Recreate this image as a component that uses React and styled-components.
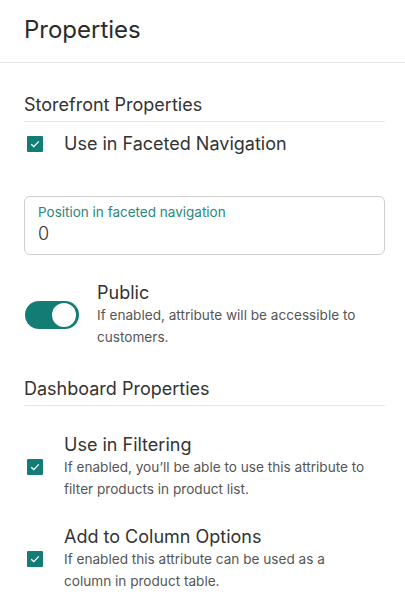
import React from 'react'
import styled, { createGlobalStyle } from 'styled-components'

const GlobalStyle = createGlobalStyle`
  body {
    margin: 0;
    background: #ffffff;
    font-family: Inter, "Noto Sans", sans-serif;
    color: #333333;
  }
`

const teal = '#137d75'

const Page = styled.div`
  width: 405px;
  background: #fff;
`

const Header = styled.header`
  padding: 15px 20px 17px 24px;
  border-bottom: 1px solid #e8e8e8;
`

const Title = styled.h1`
  margin: 0;
  font-size: 24px;
  line-height: 30px;
  font-weight: 400;
  color: #2b2b2b;
`

const Body = styled.div`
  padding: 0 20px 0 24px;
`

const SectionTitle = styled.h2`
  margin: ${p => p.$top}px 0 0;
  padding-bottom: 4px;
  font-size: 18px;
  line-height: 24px;
  font-weight: 400;
  color: #333;
  border-bottom: 1px solid #e8e8e8;
`

const Row = styled.div`
  display: flex;
  align-items: center;
  margin-top: ${p => p.$top}px;
  padding-right: 16px;
`

const CheckWrap = styled.div`
  width: 40px;
  flex: none;
  display: flex;
`

const Box = styled.span`
  width: 16px;
  height: 16px;
  margin-left: 3px;
  border-radius: 1px;
  background: ${teal};
  display: flex;
  align-items: center;
  justify-content: center;
`

const Text = styled.div`
  display: flex;
  flex-direction: column;
`

const Label = styled.div`
  font-size: 18px;
  line-height: ${p => p.$lh || 22}px;
  color: #333;
`

const Hint = styled.div`
  font-size: 13.6px;
  line-height: 22px;
  color: #555;
`

const Field = styled.div`
  margin-top: 40px;
  height: 59px;
  box-sizing: border-box;
  border: 1px solid #cfcfcf;
  border-radius: 6px;
  padding: 7px 13px 0;
`

const FieldLabel = styled.div`
  font-size: 13.5px;
  line-height: 16px;
  color: #2a877d;
`

const FieldValue = styled.div`
  margin-top: 3px;
  font-size: 18px;
  line-height: 22px;
  color: #333;
  font-weight: 300;
`

const Switch = styled.span`
  width: 54px;
  height: 28px;
  margin-left: 1px;
  flex: none;
  border-radius: 14px;
  background: ${teal};
  display: flex;
  align-items: center;
  justify-content: flex-end;
  padding: 0 3px;
  box-sizing: border-box;
  margin-right: 18px;
`

const Knob = styled.span`
  width: 24px;
  height: 24px;
  border-radius: 50%;
  background: #fff;
`

const Check = () => (
  <CheckWrap>
    <Box>
      <svg width="12" height="12" viewBox="0 0 12 12">
        <path d="M2.2 6.2 L4.8 8.6 L9.8 3.4" fill="none" stroke="#fff" strokeWidth="1.3" />
      </svg>
    </Box>
  </CheckWrap>
)

export default function App () {
  return (
    <Page>
      <GlobalStyle />
      <Header>
        <Title>Properties</Title>
      </Header>
      <Body>
        <SectionTitle $top={30}>Storefront Properties</SectionTitle>
        <Row $top={10}>
          <Check />
          <Label $lh={24}>Use in Faceted Navigation</Label>
        </Row>
        <Field>
          <FieldLabel>Position in faceted navigation</FieldLabel>
          <FieldValue>0</FieldValue>
        </Field>
        <Row $top={27}>
          <Switch><Knob /></Switch>
          <Text>
            <Label>Public</Label>
            <Hint>If enabled, attribute will be accessible to customers.</Hint>
          </Text>
        </Row>
        <SectionTitle $top={29}>Dashboard Properties</SectionTitle>
        <Row $top={28}>
          <Check />
          <Text>
            <Label>Use in Filtering</Label>
            <Hint>If enabled, you’ll be able to use this attribute to filter products in product list.</Hint>
          </Text>
        </Row>
        <Row $top={26}>
          <Check />
          <Text>
            <Label>Add to Column Options</Label>
            <Hint>If enabled this attribute can be used as a column in product table.</Hint>
          </Text>
        </Row>
      </Body>
    </Page>
  )
}
